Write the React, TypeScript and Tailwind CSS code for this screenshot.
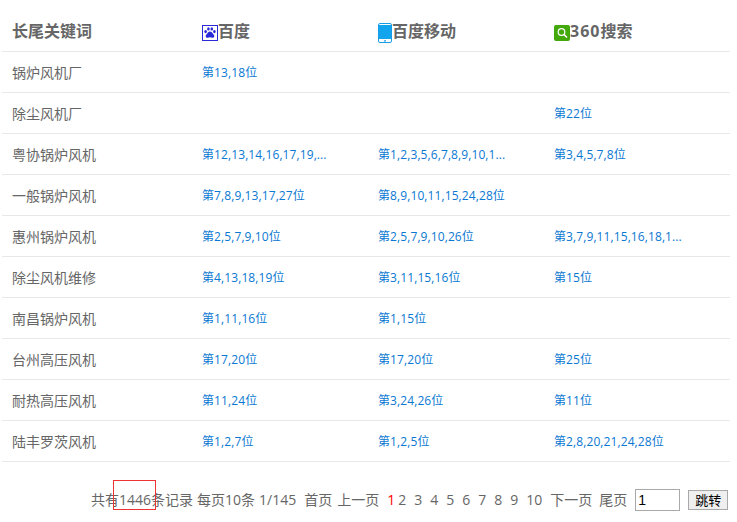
import React from 'react';

const rows = [
    { name: '锅炉风机厂', baidu: '第13,18位', mobile: '', so: '' },
    { name: '除尘风机厂', baidu: '', mobile: '', so: '第22位' },
    { name: '粤协锅炉风机', baidu: '第12,13,14,16,17,19,...', mobile: '第1,2,3,5,6,7,8,9,10,1...', so: '第3,4,5,7,8位' },
    { name: '一般锅炉风机', baidu: '第7,8,9,13,17,27位', mobile: '第8,9,10,11,15,24,28位', so: '' },
    { name: '惠州锅炉风机', baidu: '第2,5,7,9,10位', mobile: '第2,5,7,9,10,26位', so: '第3,7,9,11,15,16,18,1...' },
    { name: '除尘风机维修', baidu: '第4,13,18,19位', mobile: '第3,11,15,16位', so: '第15位' },
    { name: '南昌锅炉风机', baidu: '第1,11,16位', mobile: '第1,15位', so: '' },
    { name: '台州高压风机', baidu: '第17,20位', mobile: '第17,20位', so: '第25位' },
    { name: '耐热高压风机', baidu: '第11,24位', mobile: '第3,24,26位', so: '第11位' },
    { name: '陆丰罗茨风机', baidu: '第1,2,7位', mobile: '第1,2,5位', so: '第2,8,20,21,24,28位' },
];

const BaiduIcon = () => (
    <svg width="16" height="16" viewBox="0 0 16 16" className="flex-shrink-0 mt-[4px]">
        <rect x="0.5" y="0.5" width="15" height="15" fill="#fff" stroke="#2a2ad8" />
        <g fill="#2a2ad8">
            <ellipse cx="3.6" cy="6.6" rx="1.3" ry="1.7" />
            <ellipse cx="6.4" cy="3.9" rx="1.3" ry="1.7" />
            <ellipse cx="9.8" cy="3.9" rx="1.3" ry="1.7" />
            <ellipse cx="12.4" cy="6.6" rx="1.3" ry="1.7" />
            <path d="M8 6.6c1.5 0 2.2 1.4 3.1 2.3.8.8 1.4 1.5 1.2 2.5-.2 1-1.1 1.4-2 1.3-1-.1-1.6-.4-2.3-.4s-1.3.3-2.3.4c-.9.1-1.8-.3-2-1.3-.2-1 .4-1.7 1.2-2.5C5.8 8 6.5 6.6 8 6.6z" />
        </g>
    </svg>
);

const MobileIcon = () => (
    <svg width="14" height="20" viewBox="0 0 14 20" className="flex-shrink-0 mt-[4px]">
        <rect x="0.5" y="0.5" width="13" height="19" rx="1.5" fill="#fff" stroke="#1a9be8" />
        <rect x="1" y="2" width="12" height="14" fill="#12a5ee" />
        <rect x="6" y="17.3" width="2" height="1.2" fill="#1a9be8" />
    </svg>
);

const SoIcon = () => (
    <svg width="16" height="16" viewBox="0 0 16 16" className="flex-shrink-0 mt-[4px]">
        <rect width="16" height="16" rx="2" fill="#43a80c" />
        <circle cx="7.5" cy="7" r="3.3" fill="none" stroke="#fff" strokeWidth="1.2" />
        <path d="M10 9.5L13 12.5" stroke="#fff" strokeWidth="1.6" />
    </svg>
);

const pages = ['1', '2', '3', '4', '5', '6', '7', '8', '9', '10'];

export default function App() {
    return (
        <div className="relative w-[737px] h-[522px] overflow-hidden bg-white font-['Open_Sans','Noto_Sans_CJK_SC',sans-serif] text-[#666]">
            <div className="w-[728px] ml-[2px]">
                <div className="flex h-[52px] items-center border-b border-[#e8e8e8] text-base font-bold pt-[10px]">
                    <div className="w-[200px] pl-[10px]">长尾关键词</div>
                    <div className="w-[176px] flex items-center"><BaiduIcon />百度</div>
                    <div className="w-[176px] flex items-center"><MobileIcon />百度移动</div>
                    <div className="flex items-center"><SoIcon /><span className="tracking-[1px]">360</span>搜索</div>
                </div>
                {rows.map((row) => (
                    <div key={row.name} className="flex h-[41px] items-center border-b border-[#e8e8e8] pt-[2px]">
                        <div className="w-[200px] pl-[10px] text-sm">{row.name}</div>
                        <div className="w-[176px] text-xs tracking-[0.1px] text-[#0a78d2]">{row.baidu}</div>
                        <div className="w-[176px] text-xs tracking-[0.1px] text-[#0a78d2]">{row.mobile}</div>
                        <div className="text-xs tracking-[0.1px] text-[#0a78d2]">{row.so}</div>
                    </div>
                ))}
            </div>
            <div className="flex items-center h-[24px] mt-[26px] ml-[91px] text-sm whitespace-nowrap">
                <span>共有1446条记录</span>
                <span className="ml-1">每页10条</span>
                <span className="ml-1">1/145</span>
                <span className="ml-2">首页</span>
                <span className="ml-[5px]">上一页</span>
                <div className="flex gap-[8px] ml-2">
                    {pages.map((p) => (
                        <span key={p} className={p === '1' ? 'text-[#f00] mr-[-5px]' : ''}>{p}</span>
                    ))}
                </div>
                <span className="ml-2">下一页</span>
                <span className="ml-[7px]">尾页</span>
                <input
                    readOnly
                    value="1"
                    className="ml-2 w-[45px] h-[22px] border border-[#a9a9a9] px-[2px] text-sm text-black font-['Liberation_Sans',sans-serif]"
                />
                <button className="ml-2 w-[40px] h-[20px] border border-[#a9a9a9] bg-[#efefef] text-[13px] leading-none text-black">跳转</button>
            </div>
            {/* red highlight box over the record count */}
            <div className="absolute left-[113px] top-[480px] w-[43px] h-[30px] border border-[#e33]" />
        </div>
    );
}
